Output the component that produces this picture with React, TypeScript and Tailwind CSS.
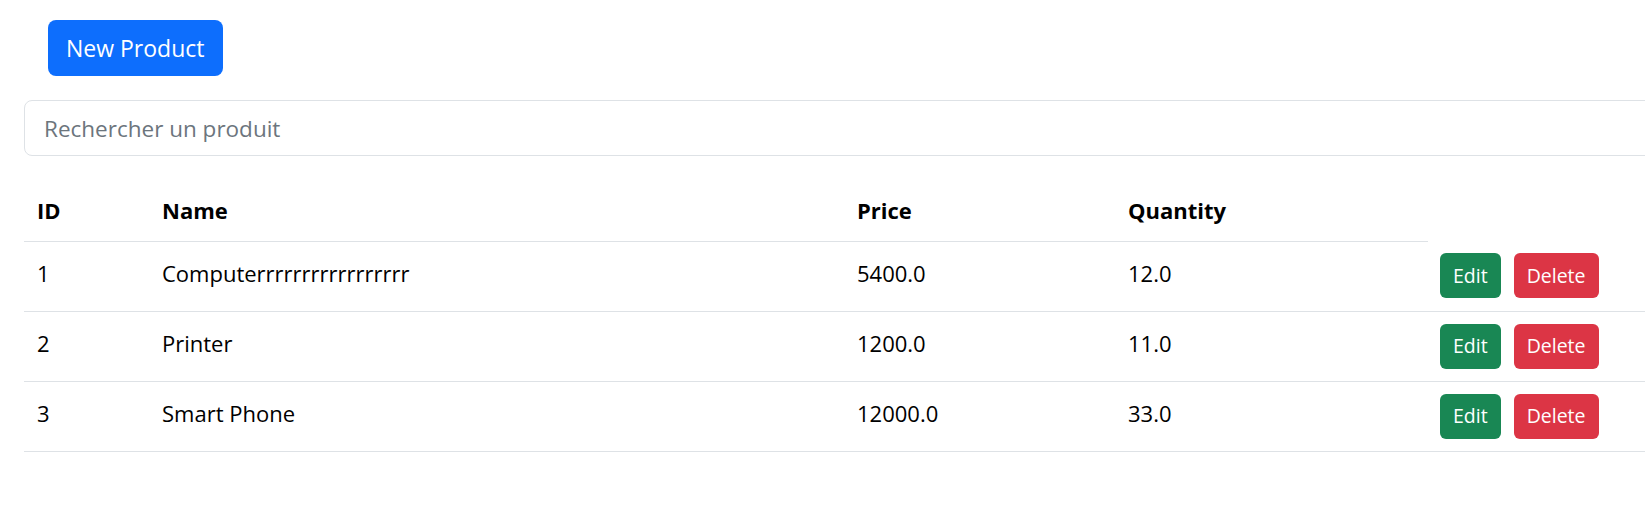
const PRODUCTS = [
  { id: 1, name: 'Computerrrrrrrrrrrrrrrrr', price: '5400.0', quantity: '12.0' },
  { id: 2, name: 'Printer', price: '1200.0', quantity: '11.0' },
  { id: 3, name: 'Smart Phone', price: '12000.0', quantity: '33.0' },
];

export default function App() {
  return (
    <div className="w-screen overflow-hidden bg-white text-[#212529] font-['Segoe_UI','Open_Sans',sans-serif]">
      <div className="w-[1760px] px-[24px] flex flex-col">
        <div className="pt-[20px] pl-[24px]">
          <button className="h-[56px] px-[18px] rounded-[8px] bg-[#0d6efd] text-white text-[23px] leading-none">
            New Product
          </button>
        </div>

        <input
          type="text"
          placeholder="Rechercher un produit"
          className="mt-[24px] h-[56px] w-full rounded-[8px] border border-[#dee2e6] px-[19px] text-[22.5px] placeholder:text-[#6c757d] outline-none"
        />

        <table className="mt-[26px] w-full border-collapse text-[22px]">
          <thead>
            <tr>
              <th className="w-[125px] h-[59px] pl-[13px] pb-[2px] text-left font-bold text-black border-b border-[#dee2e6]">ID</th>
              <th className="w-[695px] pl-[13px] pb-[2px] text-left font-bold text-black border-b border-[#dee2e6]">Name</th>
              <th className="w-[271px] pl-[13px] pb-[2px] text-left font-bold text-black border-b border-[#dee2e6]">Price</th>
              <th className="w-[313px] pl-[13px] pb-[2px] text-left font-bold text-black border-b border-[#dee2e6]">Quantity</th>
            </tr>
          </thead>
          <tbody>
            {PRODUCTS.map((p) => (
              <tr key={p.id} className="border-b border-[#dee2e6] text-black">
                <td className="h-[70px] pl-[13px] pb-[6px]">{p.id}</td>
                <td className="pl-[13px] pb-[6px]">{p.name}</td>
                <td className="pl-[13px] pb-[6px]">{p.price}</td>
                <td className="pl-[13px] pb-[6px]">{p.quantity}</td>
                <td className="pl-[12px]">
                  <div className="flex gap-[13px]">
                    <button className="h-[45px] px-[13px] rounded-[6px] bg-[#198754] text-white text-[19.5px]">Edit</button>
                    <button className="h-[45px] px-[13px] rounded-[6px] bg-[#dc3545] text-white text-[19.5px]">Delete</button>
                  </div>
                </td>
              </tr>
            ))}
          </tbody>
        </table>
      </div>
    </div>
  );
}
